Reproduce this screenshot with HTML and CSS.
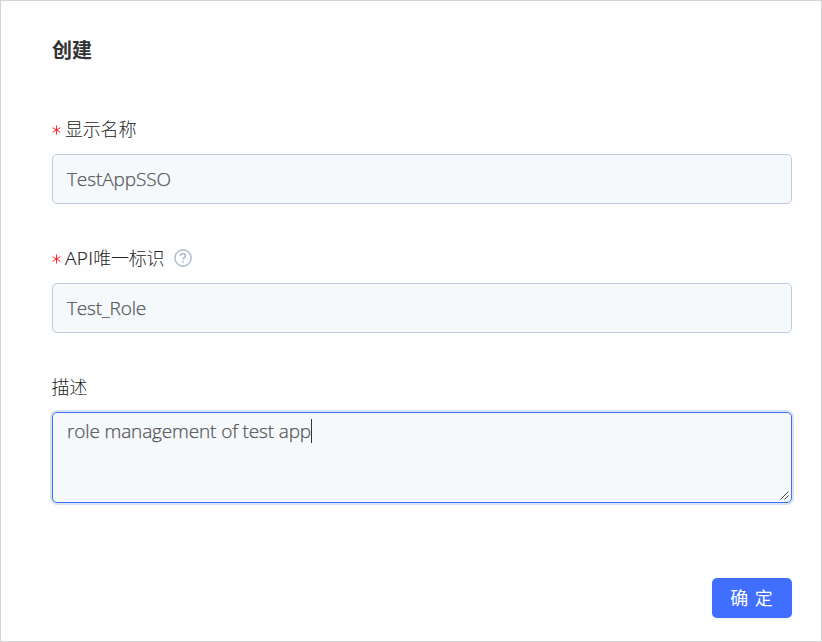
FILE: index.html
```html
<!DOCTYPE html>
<html lang="zh-CN">
<head>
<meta charset="utf-8">
<title>创建</title>
<link rel="stylesheet" href="styles.css">
</head>
<body>
<main class="dialog">
  <h1 class="title">创建</h1>
  <div class="field">
    <div class="label"><svg class="required" viewBox="0 0 9 10"><path d="M4.5 .5v9M.6 2.7l7.8 4.6M8.4 2.7L.6 7.3"/></svg><span>显示名称</span></div>
    <div class="input"><span class="v-name">TestAppSSO</span></div>
  </div>
  <div class="field">
    <div class="label"><svg class="required" viewBox="0 0 9 10"><path d="M4.5 .5v9M.6 2.7l7.8 4.6M8.4 2.7L.6 7.3"/></svg><span><span class="latin">API</span>唯一标识</span>
      <svg class="help" viewBox="0 0 18 18"><circle cx="9" cy="9" r="8.1"/><path class="mark" d="M6.6 7.1C6.6 5.5 7.6 4.7 9 4.7s2.4.8 2.4 2.1c0 1.7-2.3 1.8-2.3 3.7"/><path class="mark" d="M9.1 11.9v1.6"/></svg>
    </div>
    <div class="input"><span class="v-api">Test_Role</span></div>
  </div>
  <div class="field">
    <div class="label"><span>描述</span></div>
    <div class="input area"><span class="v-desc">role management of test app</span><i class="caret"></i>
      <svg class="grip" viewBox="0 0 9 9"><path d="M.5 8.5l8-8M4.5 8.5l4-4"/></svg>
    </div>
  </div>
  <div class="actions"><button class="confirm">确 定</button></div>
</main>
</body>
</html>
```
FILE: styles.css
```css
* { box-sizing: border-box; }
body { margin: 0; font-family: "Open Sans", "Noto Sans CJK SC", sans-serif; background: #fefefe; }
.dialog { width: 822px; height: 642px; border: 1px solid #d4d4d4; padding: 35px 29px 0 51px; overflow: hidden; }
.title { margin: 0 0 48px; font-size: 20px; line-height: 30px; font-weight: 700; color: #333; }
.field { margin-bottom: 39px; }
.label { display: flex; align-items: center; height: 30px; margin-bottom: 10px; font-size: 18px; letter-spacing: -.2px; font-weight: 300; line-height: 30px; color: #222; }
.label > span { margin-left: -.5px; }
.required { width: 9px; height: 10px; margin: 1px 4.5px 0 0; fill: none; stroke: #ff2634; stroke-width: 1; }
.latin { font-size: 19px; letter-spacing: .3px; -webkit-text-stroke: .2px; }
.help { width: 18px; height: 18px; margin-left: 10px; fill: none; stroke: #b5c0d4; stroke-width: 1.6; }
.help .mark { stroke-width: 1.8; }
.input { display: flex; align-items: center; height: 50px; padding: 0 14px; border: 1px solid #bfcbdc; border-radius: 5px; background: #f5f9fc; color: #575757; font-size: 19px; font-weight: 300; line-height: 28px; white-space: nowrap; -webkit-text-stroke: .25px; }
.v-name { letter-spacing: -.1px; }
.v-api { letter-spacing: -.17px; }
.v-desc { letter-spacing: -.14px; }
.area { position: relative; align-items: flex-start; height: 91px; padding-top: 4px; border-color: #406eff; box-shadow: 0 0 0 2px #dae4f1; }
.caret { width: 1px; height: 24px; margin-top: 2px; background: #333; }
.grip { position: absolute; right: 2px; bottom: 2px; width: 9px; height: 9px; fill: none; stroke: #444; stroke-width: 1; }
.actions { display: flex; justify-content: flex-end; padding-top: 36px; }
.confirm { width: 80px; height: 40px; padding: 0; border: 0; border-radius: 5px; background: #406eff; box-shadow: 0 2px 2px #f3f3f5; color: #fff; font: 400 18px/40px "Open Sans", "Noto Sans CJK SC", sans-serif; letter-spacing: 1px; }
```
